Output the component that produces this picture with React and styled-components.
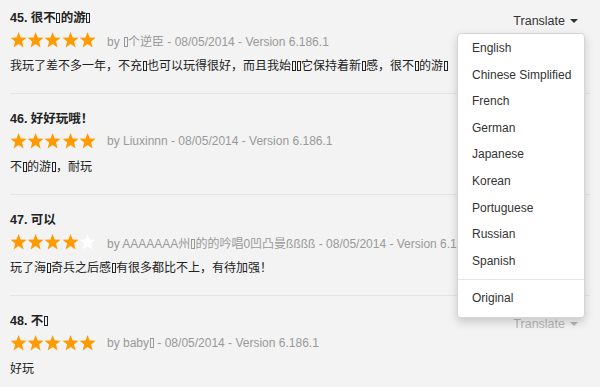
import React from 'react';
import styled, { createGlobalStyle } from 'styled-components';

const GlobalStyle = createGlobalStyle`
  html, body {
    margin: 0;
    padding: 0;
    background: #f3f3f3;
  }
  body {
    font-family: "Liberation Sans", "Noto Sans CJK SC", Arial, sans-serif;
    font-size: 12px;
    color: #333;
  }
`;

const Page = styled.div`
  position: relative;
  width: 600px;
  height: 387px;
  overflow: hidden;
  padding: 0 10px;
  box-sizing: border-box;
`;

const Review = styled.div`
  padding: ${({ first }) => (first ? '9px' : '16px')} 0 18px;
  border-bottom: 1px solid #e4e4e4;
`;

const Header = styled.div`
  display: flex;
  justify-content: space-between;
  align-items: flex-start;
  height: 18px;
`;

const Title = styled.div`
  font-weight: bold;
  font-size: 12.5px;
  color: #222;
  line-height: 18px;
`;

const TranslateButton = styled.div`
  display: flex;
  align-items: center;
  gap: 5px;
  margin-right: 12px;
  margin-top: 3px;
  font-size: 12.5px;
  color: ${({ faded }) => (faded ? '#b5b5b5' : '#333')};
  line-height: 18px;
`;

const Caret = styled.span`
  width: 0;
  height: 0;
  border-left: 4px solid transparent;
  border-right: 4px solid transparent;
  border-top: 4px solid currentColor;
`;

const MetaRow = styled.div`
  display: flex;
  align-items: center;
  margin-top: 3px;
  height: 20px;
  white-space: nowrap;
`;

const Stars = styled.div`
  display: flex;
  width: 86px;
  margin-right: 11px;
`;

const StarIcon = styled.svg`
  width: 17.2px;
  height: 18px;
  flex: none;
`;

const Meta = styled.span`
  color: #999;
  font-size: 12px;
`;

const Body = styled.div`
  margin-top: 7px;
  line-height: 18px;
  font-size: 12px;
  color: #222;
  white-space: nowrap;
`;

const Tofu = styled.span`
  display: inline-block;
  width: 4px;
  height: 10px;
  border: 1px solid currentColor;
  box-sizing: border-box;
  margin: 0 0.5px;
  vertical-align: -1px;
`;

const Menu = styled.div`
  position: absolute;
  top: 33px;
  left: 457px;
  width: 128px;
  padding: 1px 0 5px;
  background: #fff;
  border: 1px solid #d6d6d6;
  border-radius: 4px;
  box-shadow: 0 4px 10px rgba(0, 0, 0, 0.18);
  box-sizing: border-box;
`;

const MenuItem = styled.div`
  padding: 0 14px;
  line-height: 26.6px;
  font-size: 12px;
  color: #333;
  white-space: nowrap;
`;

const Divider = styled.div`
  height: 1px;
  background: #e5e5e5;
  margin: 5px 0;
`;

const Star = ({ filled }) => (
  <StarIcon viewBox="0 0 18 18">
    <polygon
      points="9,0.6 11.2,6.3 17.4,6.6 12.6,10.5 14.2,16.8 9,13.3 3.8,16.8 5.4,10.5 0.6,6.6 6.8,6.3"
      fill={filled ? '#ff9a00' : '#ffffff'}
    />
  </StarIcon>
);

const Rating = ({ value }) => (
  <Stars>
    {[1, 2, 3, 4, 5].map((i) => (
      <Star key={i} filled={i <= value} />
    ))}
  </Stars>
);

const T = () => <Tofu />;

const reviews = [
  {
    title: <>45. 很不<T />的游<T /></>,
    rating: 5,
    meta: <>by <T />个逆臣 - 08/05/2014 - Version 6.186.1</>,
    body: (
      <>
        我玩了差不多一年，不充<T />也可以玩得很好，而且我始<T /><T />它保持着新<T />感，很不<T />的游<T />
      </>
    ),
    translate: 'active',
  },
  {
    title: '46. 好好玩哦！',
    rating: 5,
    meta: 'by Liuxinnn - 08/05/2014 - Version 6.186.1',
    body: <>不<T />的游<T />，耐玩</>,
  },
  {
    title: '47. 可以',
    rating: 4,
    meta: <>by AAAAAAA州<T />的的吟唱0凹凸曼ßßßß - 08/05/2014 - Version 6.186.1</>,
    body: <>玩了海<T />奇兵之后感<T />有很多都比不上，有待加强！</>,
  },
  {
    title: <>48. 不<T /></>,
    rating: 5,
    meta: <>by baby<T /> - 08/05/2014 - Version 6.186.1</>,
    body: '好玩',
    translate: 'faded',
  },
];

const languages = [
  'English',
  'Chinese Simplified',
  'French',
  'German',
  'Japanese',
  'Korean',
  'Portuguese',
  'Russian',
  'Spanish',
];

export default function App() {
  return (
    <>
      <GlobalStyle />
      <Page>
        {reviews.map((r, i) => (
          <Review key={i} first={i === 0}>
            <Header>
              <Title>{r.title}</Title>
              {r.translate && (
                <TranslateButton faded={r.translate === 'faded'}>
                  Translate <Caret />
                </TranslateButton>
              )}
            </Header>
            <MetaRow>
              <Rating value={r.rating} />
              <Meta>{r.meta}</Meta>
            </MetaRow>
            <Body>{r.body}</Body>
          </Review>
        ))}
        <Menu>
          {languages.map((l) => (
            <MenuItem key={l}>{l}</MenuItem>
          ))}
          <Divider />
          <MenuItem>Original</MenuItem>
        </Menu>
      </Page>
    </>
  );
}
